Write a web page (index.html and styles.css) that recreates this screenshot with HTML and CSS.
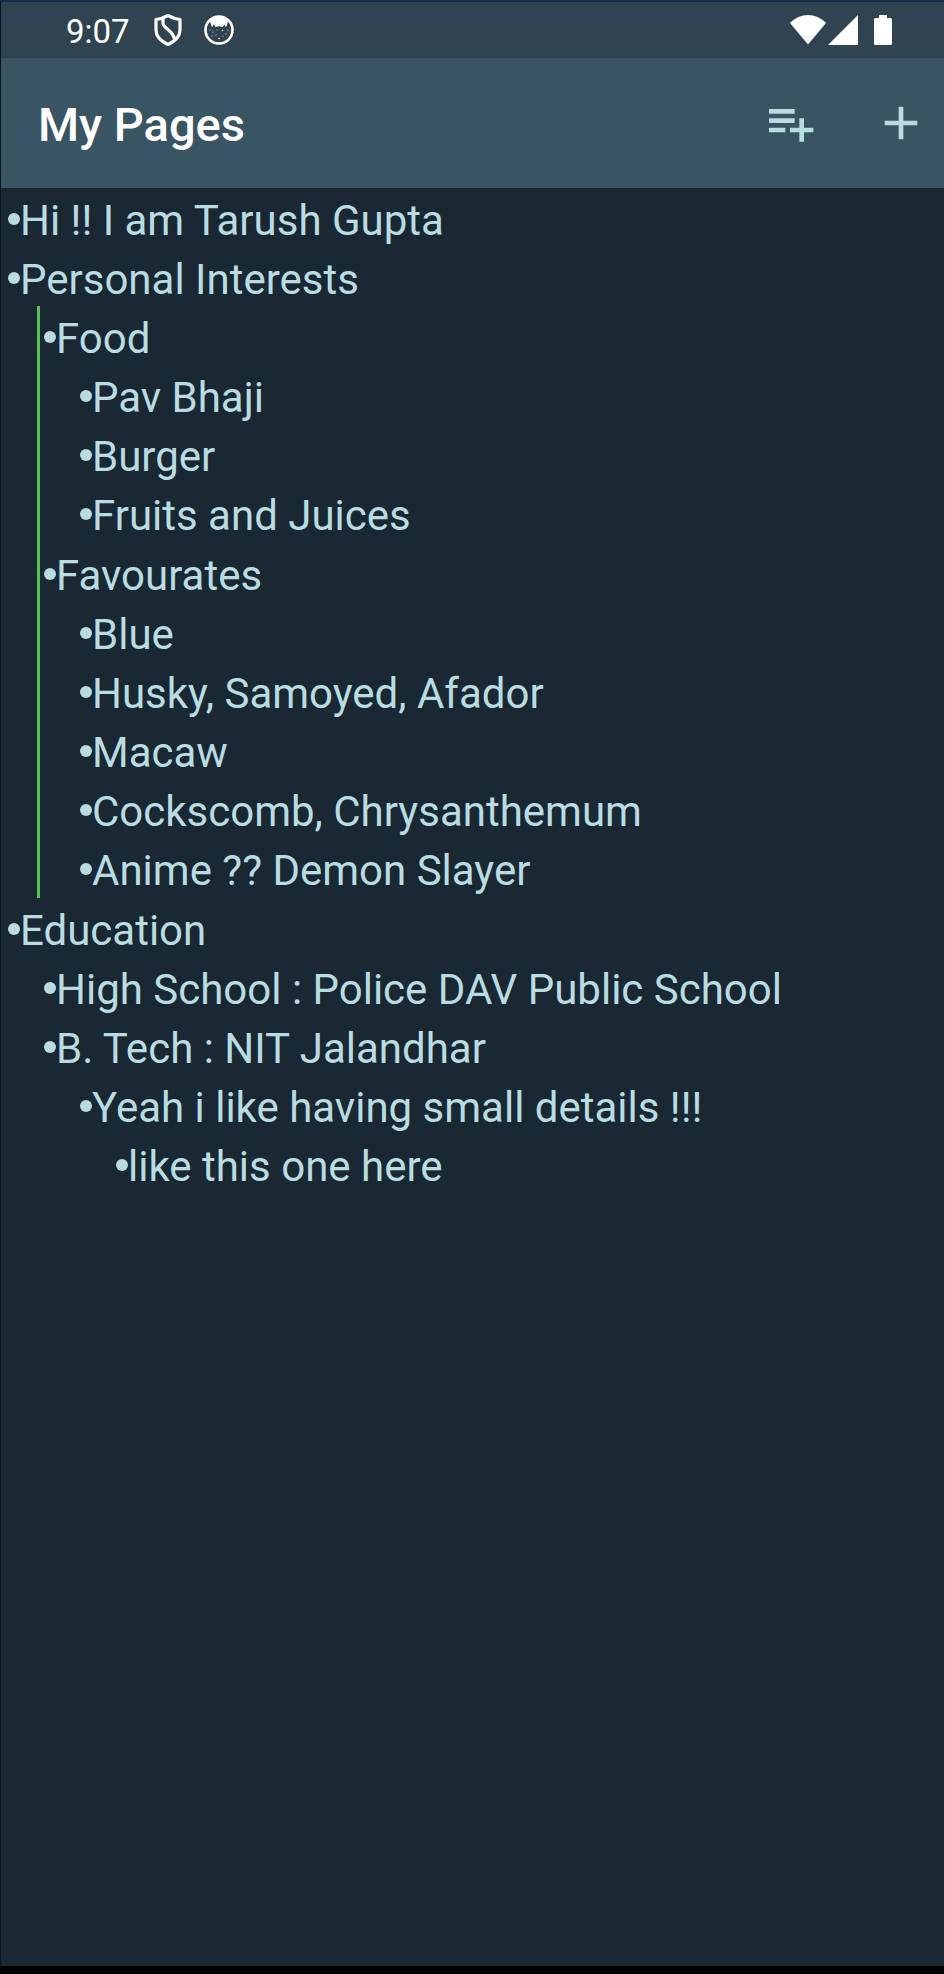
FILE: index.html
```html
<!DOCTYPE html>
<html lang="en">
<head>
<meta charset="utf-8">
<meta name="viewport" content="width=device-width, initial-scale=1">
<title>My Pages</title>
<link rel="stylesheet" href="styles.css">
</head>
<body>
<div class="screen">
  <div class="status">
    <span class="clock">9:07</span>
    <svg class="shield" viewBox="0 0 28 34" aria-hidden="true"><path d="M14 2.500Q20 6 26 6.500V17Q26 26 14 31.500Q2 26 2 17V6.500Q8 6 14 2.500ZM9 6V10C9 16 20 17 20.500 27" fill="none" stroke="#fff" stroke-width="3.200" stroke-linejoin="round"/></svg>
    <svg class="face" viewBox="0 0 30 30" aria-hidden="true"><circle cx="15" cy="15" r="13.500" fill="none" stroke="#fff" stroke-width="2.600"/><path d="M5 5Q15-2 25 5L23.500 8L22 12.500L20.500 9.500L18.500 12Q15 10.500 11.500 12L9.500 9.500L8 12.500L6.500 8Z" fill="#fff"/><g fill="#fff"><circle cx="6" cy="15" r=".5"/><circle cx="9" cy="17" r=".6"/><circle cx="13" cy="15" r=".5"/><circle cx="18.500" cy="15.500" r=".8"/><circle cx="24" cy="15" r=".6"/><circle cx="8" cy="21" r=".5"/><circle cx="12" cy="20" r=".5"/><circle cx="15" cy="23.500" r=".8"/><circle cx="19" cy="21" r=".5"/><circle cx="22" cy="19" r=".6"/></g></svg>
    <svg class="wifi" viewBox="0 0 36 30" aria-hidden="true"><path d="M0 8Q8 0 18 0T36 8L18 29.500Z" fill="#fff"/></svg>
    <svg class="signal" viewBox="0 0 30 30" aria-hidden="true"><path d="M30 0V30H0Z" fill="#fff"/></svg>
    <svg class="battery" viewBox="0 0 18 30" aria-hidden="true"><path d="M5 0H13V3H16.500Q18 3 18 4.500V28.500Q18 30 16.500 30H1.500Q0 30 0 28.500V4.500Q0 3 1.500 3H5Z" fill="#fff"/></svg>
  </div>
  <header class="bar">
    <h1 class="title">My Pages</h1>
    <button class="action" type="button" aria-label="Add to list"><svg viewBox="0 0 24 24" aria-hidden="true"><path d="M14 10H3v2h11zM14 6H3v2h11zM18 14v-4h-2v4h-4v2h4v4h2v-4h4v-2zM3 16h7v-2H3z"/></svg></button>
    <button class="action" type="button" aria-label="Add page"><svg viewBox="0 0 24 24" aria-hidden="true"><path d="M19 13h-6v6h-2v-6H5v-2h6V5h2v6h6z"/></svg></button>
  </header>
  <main class="content">
    <ul class="tree">
      <li><div class="row">Hi !! I am Tarush Gupta</div></li>
      <li><div class="row">Personal Interests</div>
        <ul class="branch guided">
          <li><div class="row">Food</div>
            <ul class="branch">
              <li><div class="row">Pav Bhaji</div></li>
              <li><div class="row">Burger</div></li>
              <li><div class="row">Fruits and Juices</div></li>
            </ul>
          </li>
          <li><div class="row">Favourates</div>
            <ul class="branch">
              <li><div class="row">Blue</div></li>
              <li><div class="row">Husky, Samoyed, Afador</div></li>
              <li><div class="row">Macaw</div></li>
              <li><div class="row">Cockscomb, Chrysanthemum</div></li>
              <li><div class="row">Anime ?? Demon Slayer</div></li>
            </ul>
          </li>
        </ul>
      </li>
      <li><div class="row">Education</div>
        <ul class="branch">
          <li><div class="row">High School : Police DAV Public School</div></li>
          <li><div class="row">B. Tech : NIT Jalandhar</div>
            <ul class="branch">
              <li><div class="row">Yeah i like having small details !!!</div>
                <ul class="branch">
                  <li><div class="row">like this one here</div></li>
                </ul>
              </li>
            </ul>
          </li>
        </ul>
      </li>
    </ul>
  </main>
</div>
</body>
</html>
```
FILE: styles.css
```css
* { box-sizing: border-box; }

body {
  margin: 0;
  background: #1a2834;
  color: #b9dce1;
  font-family: Roboto, sans-serif;
}

.screen {
  display: flex;
  flex-direction: column;
  min-height: 100vh;
  border-top: 2px solid #132f47;
  border-bottom: 8px solid #000;
  box-shadow: inset 1px 0 #06131f;
}

.status {
  display: flex;
  align-items: center;
  height: 56px;
  margin-left: 1px;
  padding: 0 52px 0 65px;
  background: #304350;
  color: #fff;
}

.status svg { display: block; flex: none; }
.clock { padding-top: 3px; font-size: 33px; line-height: 40px; }
.shield { width: 28px; height: 34px; margin-left: 24px; }
.face { width: 30px; height: 30px; margin-left: 22px; }
.wifi { width: 36px; height: 30px; margin-left: auto; }
.signal { width: 30px; height: 30px; margin-left: 2px; }
.battery { width: 18px; height: 30px; margin-left: 16px; }

.bar {
  display: flex;
  align-items: center;
  gap: 55px;
  height: 130px;
  margin-left: 1px;
  padding: 0 15px 0 37px;
  background: #395462;
}

.title {
  flex: 1;
  margin: 0;
  padding-top: 4px;
  color: #fff;
  font-size: 47px;
  font-weight: 500;
  line-height: 56px;
}

.action {
  width: 56px;
  height: 56px;
  padding: 0;
  border: 0;
  background: none;
  color: inherit;
}

.action svg { display: block; width: 100%; height: 100%; fill: currentColor; }

.content {
  flex: 1;
  margin-left: 1px;
  background: linear-gradient(#1a252e, #1a2834 12px);
}

.tree, .branch { margin: 0; padding: 0; list-style: none; }
.tree { padding-left: 7px; }
.branch { padding-left: 36px; padding-bottom: 1px; }

.guided {
  margin-left: 29px;
  padding-left: 4px;
  padding-bottom: 0;
  border-left: 3px solid #5ac05c;
}

.row {
  display: flex;
  align-items: flex-start;
  padding-top: 6px;
  font-size: 42px;
  line-height: 53px;
}

.row::before {
  content: "";
  flex: none;
  width: 12px;
  height: 12px;
  margin-top: 19px;
  border-radius: 50%;
  background: currentColor;
}
```
